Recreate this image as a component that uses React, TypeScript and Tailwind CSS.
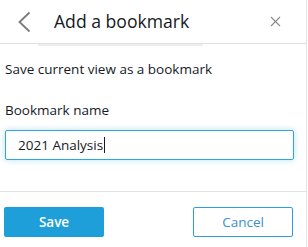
import { X } from 'lucide-react'

export default function App() {
  return (
    <div className="h-[247px] w-[308px] overflow-hidden bg-white font-['Open_Sans',sans-serif] text-[#16191f]">
      <div className="flex h-full w-[307px] flex-col border-r border-[#e4e4e4]">
        {/* Header */}
        <div className="relative flex h-[44px] shrink-0 items-center border-b border-[#e0e0e0]">
          <svg className="ml-[17px] h-[22px] w-[14px]" viewBox="0 0 14 22" fill="none">
            <path d="M12.5 1.5 L2.5 11 L12.5 20.5" stroke="#7a7a7a" strokeWidth="1.8" />
          </svg>
          <h1 className="ml-[23px] text-[17.6px] leading-none">Add a bookmark</h1>
          <X className="ml-auto mr-[22px] h-[17px] w-[17px] text-[#8a8a8a]" strokeWidth={1.5} />
          <div className="absolute -bottom-[3px] left-[38px] h-[2px] w-[165px] bg-[#ededed]" />
        </div>

        {/* Body */}
        <div className="flex flex-col px-[5px] pt-[16px]">
          <p className="text-[13.5px] leading-[18px]">Save current view as a bookmark</p>
          <label className="mt-[23px] text-[13.5px] leading-[18px]">Bookmark name</label>
          <div className="mt-[11px] flex h-[30px] w-[289px] items-center rounded-[2px] border border-[#2fa6df] pl-[12px] text-[13.5px] shadow-[0_0_6px_rgba(47,166,223,0.35)]">
            2021 Analysis
            <span className="ml-px h-[16px] w-px bg-[#16191f]" />
          </div>
        </div>

        <div className="mt-auto border-t border-[#e2e2e2] px-[4px] pb-[10px] pt-[15px]">
          <div className="flex w-[289px] justify-between">
            <button className="h-[30px] w-[100px] rounded-[2px] bg-[#1f9fd9] text-[13.5px] font-semibold text-white">
              Save
            </button>
            <button className="h-[30px] w-[100px] rounded-[2px] border border-[#2a9fd8] bg-white text-[13.5px] text-[#3a8fd0]">
              Cancel
            </button>
          </div>
        </div>
      </div>
    </div>
  )
}
